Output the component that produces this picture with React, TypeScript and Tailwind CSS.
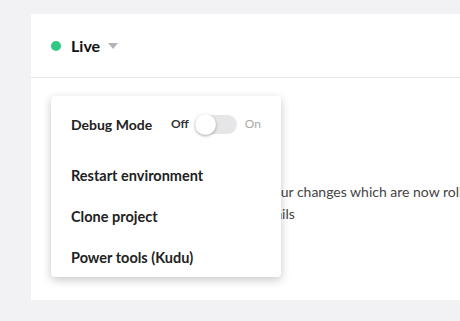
import React from 'react';

const Toggle = () => {
  return (
    <div className="relative w-[42px] h-[19px] rounded-full bg-[#e6e6e9]">
      <div className="absolute left-0 top-[-1px] w-[21px] h-[21px] rounded-full bg-white shadow-[0_1px_3px_rgba(0,0,0,0.35)]"></div>
    </div>
  );
};

const App = () => {
  const items = ['Restart environment', 'Clone project', 'Power tools (Kudu)'];

  return (
    <div className="w-full h-[321px] bg-[#f2f2f4] pt-[14px] pl-[31px] font-['Lato',sans-serif] overflow-hidden">
      <div className="relative bg-white h-[286px] w-[460px]">
        {/* header */}
        <div className="h-16 border-b border-[#e8e8ea] flex items-center pl-5">
          <span className="w-[10px] h-[10px] rounded-full bg-[#33c985]"></span>
          <span className="ml-[10px] text-[16px] font-bold text-[#111]">Live</span>
          <svg className="ml-[8px] mt-[1px]" width="10" height="6" viewBox="0 0 10 6">
            <path d="M0 0 L10 0 L5 6 Z" fill="#b3b3ba" />
          </svg>
        </div>

        {/* content behind menu */}
        <div className="pl-10 pt-[103px] text-[14px] leading-[22px] text-[#444] whitespace-nowrap">
          <p>This environment is online with your changes which are now rolling out</p>
          <p>View the deployment logs for details</p>
        </div>

        {/* dropdown */}
        <div className="absolute left-[20px] top-[82px] w-[230px] h-[181px] bg-white rounded shadow-[0_3px_10px_rgba(0,0,0,0.22)] px-5 pt-2">
          <div className="h-10 flex items-center justify-between">
            <span className="text-[14px] font-bold text-[#222]">Debug Mode</span>
            <div className="flex items-center">
              <span className="text-[12px] font-bold text-[#333]">Off</span>
              <div className="ml-[6px]">
                <Toggle />
              </div>
              <span className="ml-[8px] text-[12px] text-[#aaa]">On</span>
            </div>
          </div>
          <div className="mt-[11px]">
            {items.map((label, idx) => (
              <div key={idx} className="h-[41px] flex items-center text-[14.5px] font-bold text-[#222]">
                {label}
              </div>
            ))}
          </div>
        </div>
      </div>
    </div>
  );
};

export default App;
